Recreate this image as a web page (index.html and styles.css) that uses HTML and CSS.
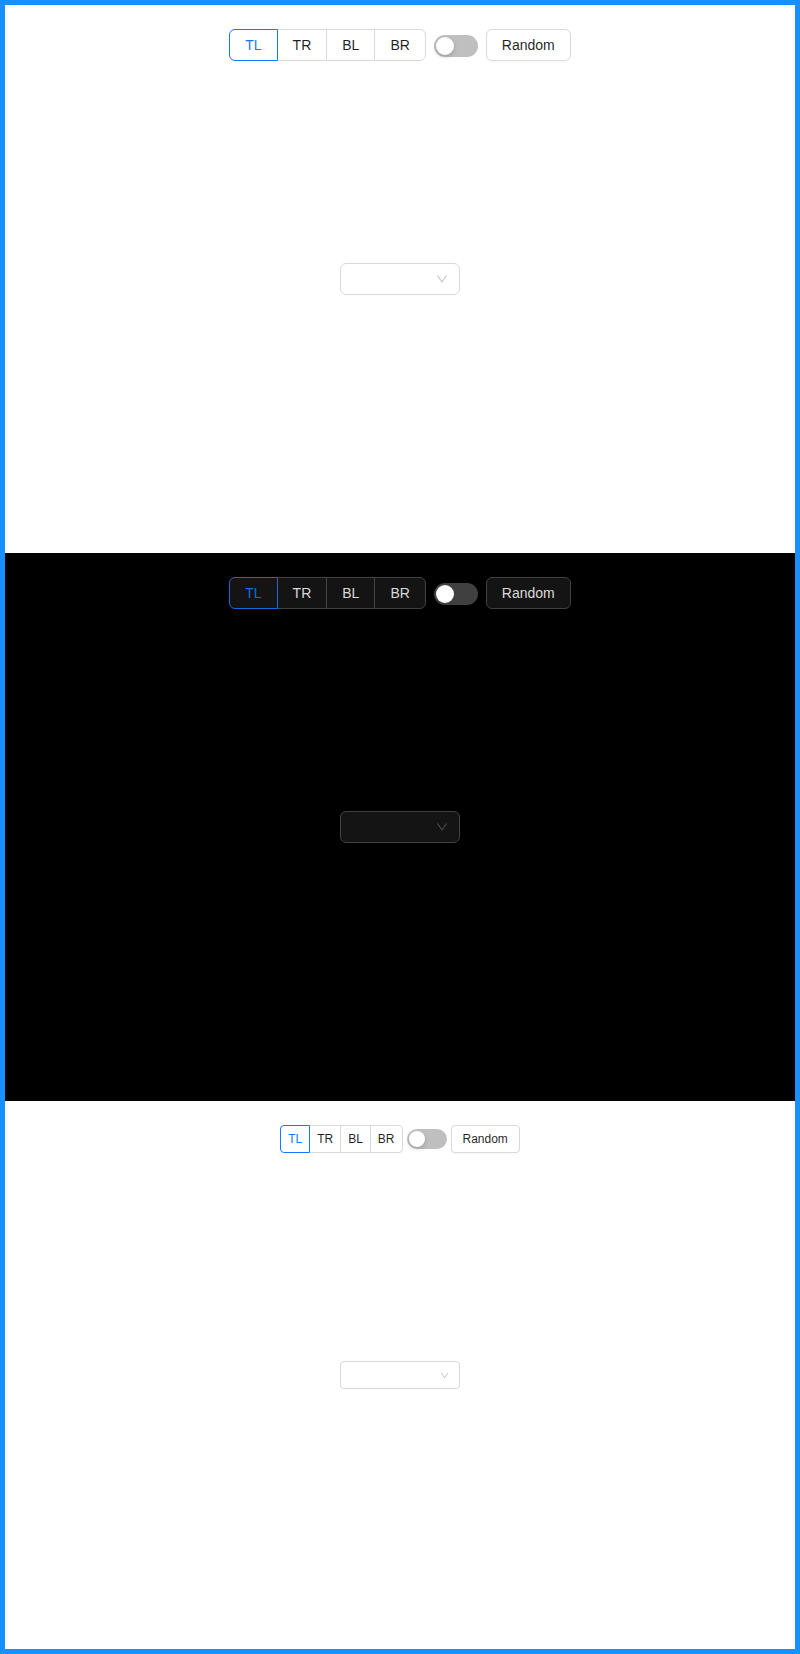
FILE: index.html
```html
<!DOCTYPE html>
<html>
<head>
<meta charset="utf-8">
<link rel="stylesheet" href="styles.css">
</head>
<body>
<div class="frame">
  <section class="pane light">
    <div class="toolbar">
      <div class="radio-group">
        <span class="radio active">TL</span>
        <span class="radio">TR</span>
        <span class="radio">BL</span>
        <span class="radio">BR</span>
      </div>
      <span class="switch"><span class="handle"></span></span>
      <span class="btn">Random</span>
    </div>
    <div class="select">
      <svg class="arrow" viewBox="64 64 896 896" aria-hidden="true"><path d="M884 256h-75c-5.1 0-9.9 2.5-12.9 7L512 654.2 227.9 263c-3-4.5-7.8-7-12.9-7h-75c-6.5 0-10.3 7.4-6.5 12.7l352.6 486.1c12.8 17.6 39 17.6 51.7 0l352.6-486.1c3.9-5.3.1-12.7-6.4-12.7z"/></svg>
    </div>
  </section>
  <section class="pane dark">
    <div class="toolbar">
      <div class="radio-group">
        <span class="radio active">TL</span>
        <span class="radio">TR</span>
        <span class="radio">BL</span>
        <span class="radio">BR</span>
      </div>
      <span class="switch"><span class="handle"></span></span>
      <span class="btn">Random</span>
    </div>
    <div class="select">
      <svg class="arrow" viewBox="64 64 896 896" aria-hidden="true"><path d="M884 256h-75c-5.1 0-9.9 2.5-12.9 7L512 654.2 227.9 263c-3-4.5-7.8-7-12.9-7h-75c-6.5 0-10.3 7.4-6.5 12.7l352.6 486.1c12.8 17.6 39 17.6 51.7 0l352.6-486.1c3.9-5.3.1-12.7-6.4-12.7z"/></svg>
    </div>
  </section>
  <section class="pane light compact">
    <div class="toolbar">
      <div class="radio-group">
        <span class="radio active">TL</span>
        <span class="radio">TR</span>
        <span class="radio">BL</span>
        <span class="radio">BR</span>
      </div>
      <span class="switch"><span class="handle"></span></span>
      <span class="btn">Random</span>
    </div>
    <div class="select">
      <svg class="arrow" viewBox="64 64 896 896" aria-hidden="true"><path d="M884 256h-75c-5.1 0-9.9 2.5-12.9 7L512 654.2 227.9 263c-3-4.5-7.8-7-12.9-7h-75c-6.5 0-10.3 7.4-6.5 12.7l352.6 486.1c12.8 17.6 39 17.6 51.7 0l352.6-486.1c3.9-5.3.1-12.7-6.4-12.7z"/></svg>
    </div>
  </section>
</div>
</body>
</html>
```

FILE: styles.css
```css
* { box-sizing: border-box; }
html, body { margin: 0; padding: 0; }
body {
  font-family: "Liberation Sans", Arial, sans-serif;
  font-size: 14px;
  background: #fff;
}
.frame {
  border: 5px solid #1890ff;
  width: 800px;
  height: 1654px;
  display: flex;
  flex-direction: column;
}
.pane {
  height: 548px;
  display: grid;
  grid-template: 1fr / 1fr;
}
.pane > * { grid-area: 1 / 1; }
.light { background: #fff; color: rgba(0,0,0,0.88); }
.dark { background: #000; color: rgba(255,255,255,0.85); }

.toolbar {
  align-self: start;
  justify-self: center;
  margin-top: 24px;
  display: flex;
  align-items: center;
  gap: 8px;
}
.radio-group { display: flex; }
.radio {
  height: 32px;
  line-height: 30px;
  padding: 0 15px;
  border: 1px solid #d9d9d9;
  margin-left: -1px;
  background: #fff;
  position: relative;
}
.radio:first-child { margin-left: 0; border-radius: 6px 0 0 6px; }
.radio:last-child { border-radius: 0 6px 6px 0; }
.radio.active { border-color: #1677ff; color: #1677ff; z-index: 1; }

.switch {
  width: 44px;
  height: 22px;
  margin-top: 2px;
  border-radius: 11px;
  background: rgba(0,0,0,0.25);
  display: flex;
  align-items: center;
  padding: 2px;
}
.handle {
  width: 18px;
  height: 18px;
  border-radius: 50%;
  background: #fff;
  box-shadow: 0 2px 4px 0 rgba(0,35,11,0.2);
}
.btn {
  height: 32px;
  line-height: 30px;
  padding: 0 15px;
  border: 1px solid #d9d9d9;
  border-radius: 6px;
  background: #fff;
  box-shadow: 0 2px 0 rgba(0,0,0,0.02);
}
.select {
  align-self: center;
  justify-self: center;
  width: 120px;
  height: 32px;
  border: 1px solid #d9d9d9;
  border-radius: 6px;
  background: #fff;
  display: flex;
  align-items: center;
  justify-content: flex-end;
  padding: 0 11px;
}
.arrow { width: 12px; height: 12px; fill: rgba(0,0,0,0.25); }

/* dark */
.dark .radio, .dark .btn, .dark .select { background: #141414; border-color: #424242; }
.dark .radio.active { border-color: #1668dc; color: #1668dc; }
.dark .switch { background: rgba(255,255,255,0.25); }
.dark .handle { box-shadow: none; }
.dark .arrow { fill: rgba(255,255,255,0.25); }

/* compact */
.compact { font-size: 12px; }
.compact .toolbar { gap: 4px; }
.compact .radio { height: 28px; line-height: 26px; padding: 0 7px; }
.compact .radio:first-child { border-radius: 4px 0 0 4px; }
.compact .radio:last-child { border-radius: 0 4px 4px 0; }
.compact .switch { width: 40px; height: 20px; margin-top: 0; border-radius: 10px; }
.compact .handle { width: 16px; height: 16px; }
.compact .btn { height: 28px; line-height: 26px; padding: 0 11px; border-radius: 4px; }
.compact .select { height: 28px; border-radius: 4px; padding: 0 10px; }
.compact .arrow { width: 9px; height: 9px; }
```
